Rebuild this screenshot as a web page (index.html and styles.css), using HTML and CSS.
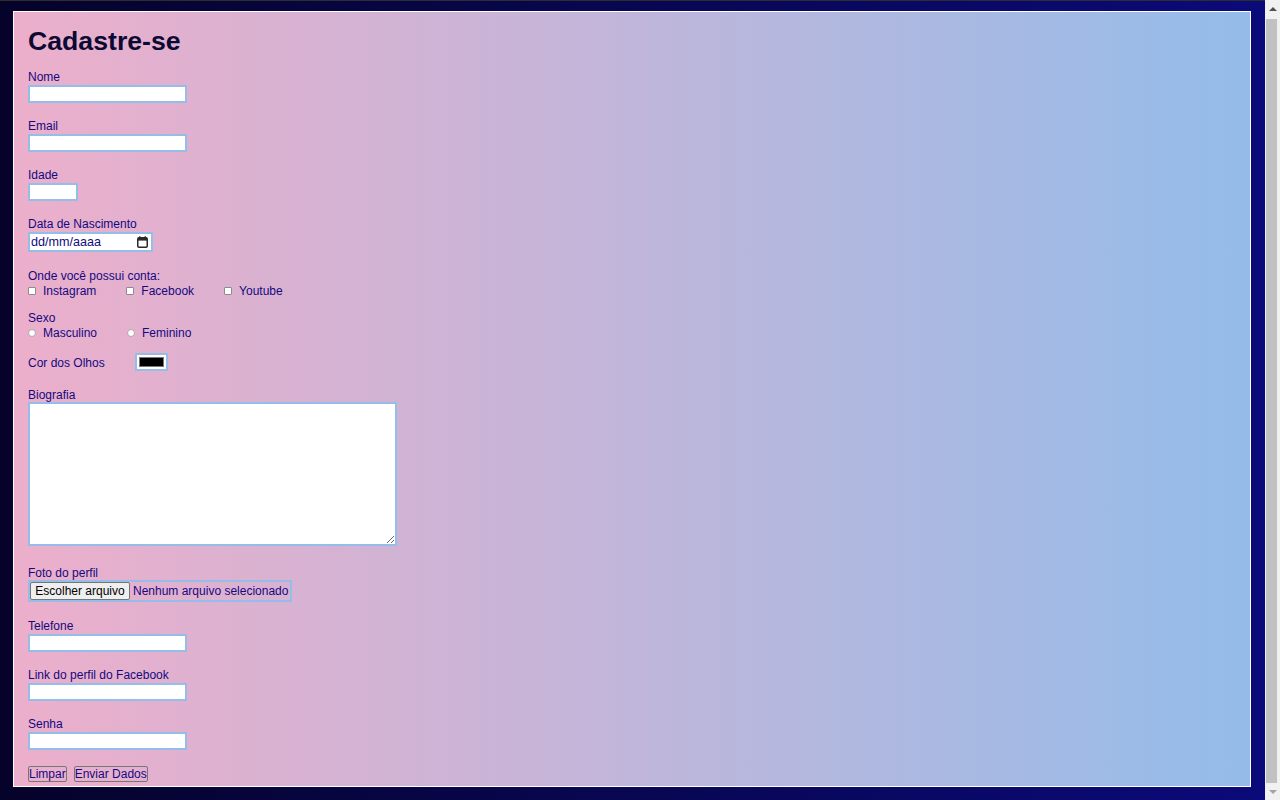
FILE: index.html
```html
<!DOCTYPE html>
<html lang="pt-BR">
<head>
<meta charset="utf-8">
<title>Cadastre-se</title>
<link rel="stylesheet" href="styles.css">
</head>
<body>
<form class="card">
  <h1 class="title">Cadastre-se</h1>

  <div class="field">
    <label class="lbl" for="nome">Nome</label>
    <input class="txt" id="nome" type="text">
  </div>

  <div class="field">
    <label class="lbl" for="email">Email</label>
    <input class="txt" id="email" type="email">
  </div>

  <div class="field">
    <label class="lbl" for="idade">Idade</label>
    <input class="txt txt-short" id="idade" type="text">
  </div>

  <div class="field field-date">
    <label class="lbl" for="nasc">Data de Nascimento</label>
    <div class="date" id="nasc">
      <span class="date-text">dd/mm/aaaa</span>
      <svg class="cal" width="11" height="12" viewBox="0 0 11 12" aria-hidden="true">
        <path d="M2.75 0.2v2.2M8.25 0.2v2.2" stroke="#2a2a2a" stroke-width="1.4"/>
        <rect x="0.75" y="1.75" width="9.5" height="9.5" rx="1.2" fill="none" stroke="#2a2a2a" stroke-width="1.5"/>
        <rect x="1" y="2" width="9" height="2.6" fill="#2a2a2a"/>
      </svg>
    </div>
  </div>

  <div class="group">
    <span class="lbl">Onde você possui conta:</span>
    <div class="opts">
      <label class="opt"><input class="box" type="checkbox">Instagram</label>
      <label class="opt"><input class="box" type="checkbox">Facebook</label>
      <label class="opt"><input class="box" type="checkbox">Youtube</label>
    </div>
  </div>

  <div class="group">
    <span class="lbl">Sexo</span>
    <div class="opts">
      <label class="opt"><input class="box round" type="radio" name="sexo">Masculino</label>
      <label class="opt"><input class="box round" type="radio" name="sexo">Feminino</label>
    </div>
  </div>

  <div class="colorrow">
    <label class="color-lbl" for="olhos">Cor dos Olhos</label>
    <input class="color" id="olhos" type="color" value="#000000">
  </div>

  <div class="field field-bio">
    <label class="lbl" for="bio">Biografia</label>
    <textarea class="bio" id="bio"></textarea>
  </div>

  <div class="field field-file">
    <span class="lbl">Foto do perfil</span>
    <div class="file">
      <button type="button" class="file-btn">Escolher arquivo</button>
      <span class="file-name">Nenhum arquivo selecionado</span>
    </div>
  </div>

  <div class="field">
    <label class="lbl" for="tel">Telefone</label>
    <input class="txt" id="tel" type="tel">
  </div>

  <div class="field">
    <label class="lbl" for="fb">Link do perfil do Facebook</label>
    <input class="txt" id="fb" type="url">
  </div>

  <div class="field">
    <label class="lbl" for="senha">Senha</label>
    <input class="txt" id="senha" type="password">
  </div>

  <div class="actions">
    <button type="reset" class="btn">Limpar</button>
    <button type="submit" class="btn">Enviar Dados</button>
  </div>
</form>

<div class="scrollbar" aria-hidden="true">
  <span class="sb-arrow sb-up"></span>
  <span class="sb-thumb"></span>
  <span class="sb-arrow sb-down"></span>
</div>
</body>
</html>
```

FILE: styles.css
```css
html, body {
  margin: 0;
  padding: 0;
}

body {
  border-top: 1px solid #2e2e2e;
  padding-bottom: 18px;
  background: linear-gradient(to right, #05032a, #0b0a7b);
  font-family: "Liberation Sans", Arial, sans-serif;
  font-size: 12px;
  line-height: 14px;
  color: #14097f;
}

.card {
  margin: 10px 29px 0 13px;
  border: 1px solid #ffffff;
  padding: 14px 14px 4px 14px;
  background: linear-gradient(to right, #ecafcb, #94bce9);
}

.title {
  margin: 0 0 13px 0;
  font-size: 26.67px;
  line-height: 31px;
  font-weight: bold;
  color: #0c0a33;
}

.field {
  display: flex;
  flex-direction: column;
  align-items: flex-start;
  margin-bottom: 16px;
}

.lbl {
  display: block;
  height: 14px;
  line-height: 14px;
}

.txt {
  margin: 1px 0 0 0;
  width: 159px;
  height: 18px;
  box-sizing: border-box;
  border: 2px solid #94bde9;
  padding: 0 2px;
  background: #ffffff;
  font-family: "Liberation Sans", Arial, sans-serif;
  font-size: 12px;
  color: #14097f;
  outline: none;
}

.txt-short {
  width: 50px;
}

.field-date {
  margin-bottom: 17px;
}

.date {
  margin-top: 1px;
  width: 125px;
  height: 20px;
  box-sizing: border-box;
  border: 2px solid #94bde9;
  background: #ffffff;
  display: flex;
  align-items: center;
  justify-content: space-between;
  padding: 0 3px 0 1px;
  font-size: 12.6px;
  color: #14097f;
}

.cal {
  display: block;
}

.group {
  margin-bottom: 13px;
}

.opts {
  display: flex;
  height: 14px;
  margin-top: 1px;
}

.opt {
  display: flex;
  align-items: center;
  margin-right: 30px;
}

.box {
  -webkit-appearance: none;
  appearance: none;
  width: 8px;
  height: 8px;
  margin: 0 7px 0 0;
  box-sizing: border-box;
  border: 1px solid #8c8c8c;
  border-radius: 1px;
  background: #ffffff;
}

.round {
  border-radius: 50%;
  border-color: #a9a9a9;
}

.colorrow {
  display: flex;
  align-items: flex-start;
  height: 18px;
  margin-bottom: 17px;
}

.color-lbl {
  margin: 3px 30px 0 0;
  line-height: 14px;
}

.color {
  width: 33px;
  height: 18px;
  box-sizing: border-box;
  margin: 0;
  border: 2px solid #94bde9;
  border-radius: 0;
  padding: 1px;
  background: #ffffff;
  cursor: pointer;
}

.color::-webkit-color-swatch-wrapper {
  padding: 1px 1px;
}

.color::-webkit-color-swatch {
  border: 1px solid #777777;
}

.field-bio {
  margin-bottom: 20px;
}

.bio {
  display: block;
  margin: 0;
  width: 369px;
  height: 144px;
  box-sizing: border-box;
  border: 2px solid #94bde9;
  background: #ffffff;
  outline: none;
}

.field-file {
  margin-bottom: 17px;
}

.file {
  display: flex;
  align-items: center;
  border: 2px solid #94bde9;
  padding-right: 2px;
}

.file-btn {
  width: 100px;
  height: 18px;
  box-sizing: border-box;
  margin: 0;
  padding: 0;
  border: 1px solid #767676;
  border-radius: 2px;
  background: #efefef;
  color: #000000;
  font-family: "Liberation Sans", Arial, sans-serif;
  font-size: 12px;
  line-height: 14px;
}

.file-name {
  margin-left: 3px;
}

.actions {
  display: flex;
  gap: 7px;
}

.btn {
  height: 16px;
  box-sizing: border-box;
  margin: 0;
  padding: 0;
  border: 1px solid #767676;
  border-radius: 2px;
  background: transparent;
  color: #14097f;
  font-family: "Liberation Sans", Arial, sans-serif;
  font-size: 12px;
  line-height: 14px;
}

/* window scrollbar drawn over the page edge */
.scrollbar {
  position: fixed;
  top: 0;
  right: 0;
  width: 15px;
  height: 100vh;
  background: #f1f1f1;
  display: flex;
  flex-direction: column;
}

.sb-arrow {
  flex: 0 0 17px;
  display: flex;
  align-items: center;
  justify-content: center;
}

.sb-up::before {
  content: "";
  width: 0;
  height: 0;
  border-left: 4px solid transparent;
  border-right: 4px solid transparent;
  border-bottom: 4px solid #505050;
}

.sb-down::before {
  content: "";
  width: 0;
  height: 0;
  border-left: 4px solid transparent;
  border-right: 4px solid transparent;
  border-top: 4px solid #a3a3a3;
}

.sb-thumb {
  flex: 1 1 auto;
  width: 11px;
  margin: 2px 0 0 1px;
  background: #c1c1c1;
}
```
